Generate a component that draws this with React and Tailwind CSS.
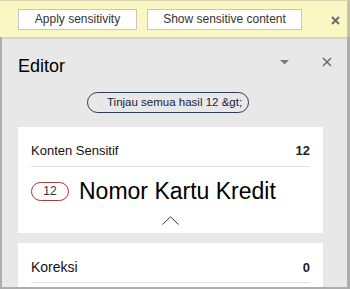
export default function App() {
  return (
    <div className="w-[350px] h-[289px] overflow-hidden flex flex-col bg-[#e8e8e8] font-['Liberation_Sans',Arial,sans-serif]">
      {/* Yellow message bar */}
      <div className="h-[37px] shrink-0 bg-[#fbf7c3] border-t border-[#d6d3b0] border-r-[3px] border-r-[#c4c2a8] flex items-start pt-[8px] pl-[18px]">
        <button className="w-[119px] h-[21px] bg-white border border-[#c6c6c6] text-[12px] leading-[19px] text-[#333] flex items-center justify-center">
          Apply sensitivity
        </button>
        <button className="ml-[10px] w-[155px] h-[21px] bg-white border border-[#c6c6c6] text-[12px] leading-[19px] text-[#333] flex items-center justify-center">
          Show sensitive content
        </button>
        <svg className="ml-[29px] mt-[7px]" width="9" height="9" viewBox="0 0 9 9">
          <path d="M1 1 L8 8 M8 1 L1 8" stroke="#6a6a6a" strokeWidth="2" />
        </svg>
      </div>

      {/* Editor panel */}
      <div className="h-[252px] shrink-0 overflow-hidden border-l-2 border-r-[3px] border-b-2 border-[#adadad] bg-[#e8e8e8] flex flex-col">
        <div className="h-[3px] shrink-0 bg-gradient-to-b from-[#c9c9c9] to-[#e8e8e8]" />
        <div className="pl-[16px] pt-[15px] flex flex-col">
          {/* Header */}
          <div className="flex items-start h-[22px]">
            <div className="flex-1 text-[18px] leading-[22px] text-black">Editor</div>
            <svg className="mt-[5px]" width="9" height="5" viewBox="0 0 9 5">
              <path d="M0 0 L9 0 L4.5 4.5 Z" fill="#7a7a7a" />
            </svg>
            <svg className="ml-[33px] mr-[15px] mt-[2px]" width="10" height="10" viewBox="0 0 10 10">
              <path d="M1 1 L9 9 M9 1 L1 9" stroke="#6e6e6e" strokeWidth="1.6" />
            </svg>
          </div>

          {/* Review pill */}
          <div className="mt-[15px] ml-[69px] w-[162px] h-[21px] rounded-full border border-[#2e3a5a] flex items-center pl-[19px] text-[11.5px] leading-[19px] text-[#1a2240] whitespace-nowrap">
            Tinjau semua hasil 12 &amp;gt;
          </div>

          {/* Card 1 */}
          <div className="mt-[14px] w-[305px] h-[106px] shrink-0 bg-white px-[13px] pt-[16px] flex flex-col">
            <div className="flex items-center h-[16px]">
              <span className="flex-1 text-[13px] leading-[16px] text-[#111]">Konten Sensitif</span>
              <span className="text-[13px] leading-[16px] font-bold text-[#222]">12</span>
            </div>
            <div className="mt-[7px] h-px bg-[#e1e1e1]" />
            <div className="mt-[11px] h-[26px] flex items-center">
              <div className="w-[38px] h-[19px] rounded-full border border-[#a83a3f] flex items-center justify-center text-[12px] text-[#333]">
                12
              </div>
              <span className="ml-[10px] text-[23px] leading-[26px] text-black whitespace-nowrap">Nomor Kartu Kredit</span>
            </div>
            <div className="mt-[12px] flex justify-center">
              <svg width="17" height="9" viewBox="0 0 17 9">
                <path d="M0.5 8.5 L8.5 0.8 L16.5 8.5" fill="none" stroke="#333" strokeWidth="1" />
              </svg>
            </div>
          </div>

          {/* Card 2 */}
          <div className="mt-[10px] w-[305px] h-[60px] shrink-0 bg-white px-[13px] pt-[16px] flex flex-col">
            <div className="flex items-center h-[17px]">
              <span className="flex-1 text-[14px] leading-[17px] text-[#111]">Koreksi</span>
              <span className="text-[13px] leading-[17px] font-bold text-[#222]">0</span>
            </div>
            <div className="mt-[6px] h-px bg-[#e1e1e1]" />
          </div>
        </div>
      </div>
    </div>
  );
}
